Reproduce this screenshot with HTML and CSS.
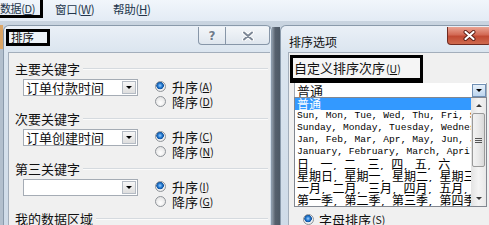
FILE: index.html
```html
<!DOCTYPE html>
<html lang="zh-CN">
<head>
<meta charset="utf-8">
<title>排序</title>
<link rel="stylesheet" href="styles.css">
</head>
<body>
<div class="screen">
  <div class="menubar">
    <span class="menu menu-data">数据(<u>D</u>)</span>
    <span class="menu menu-win">窗口(<u>W</u>)</span>
    <span class="menu menu-help">帮助(<u>H</u>)</span>
  </div>
  <div class="desk">
    <div class="edge"></div>
    <div class="dlg dlg-sort">
      <div class="titlebar">
        <span class="title title-box">排序</span>
        <div class="caps">
          <span class="cap cap-help">?</span>
          <span class="cap cap-close">
            <svg width="12" height="10" viewBox="0 0 12 10"><path d="M2 1.5 L10 8.5 M10 1.5 L2 8.5" stroke="#fff" stroke-width="4" stroke-linecap="round"/><path d="M2 1.5 L10 8.5 M10 1.5 L2 8.5" stroke="#7c8796" stroke-width="2" stroke-linecap="round"/></svg>
          </span>
        </div>
      </div>
      <div class="content content-sort">
        <div class="group">
          <div class="glabel">主要关键字</div>
          <div class="grow">
            <div class="combo"><span class="ctext">订单付款时间</span><span class="dd"></span></div>
            <div class="radios">
              <div class="radio"><span class="rb on"></span>升序<span class="acc">(<u>A</u>)</span></div>
              <div class="radio"><span class="rb"></span>降序<span class="acc">(<u>D</u>)</span></div>
            </div>
          </div>
        </div>
        <div class="group">
          <div class="glabel">次要关键字</div>
          <div class="grow">
            <div class="combo"><span class="ctext">订单创建时间</span><span class="dd"></span></div>
            <div class="radios">
              <div class="radio"><span class="rb on"></span>升序<span class="acc">(<u>C</u>)</span></div>
              <div class="radio"><span class="rb"></span>降序<span class="acc">(<u>N</u>)</span></div>
            </div>
          </div>
        </div>
        <div class="group">
          <div class="glabel">第三关键字</div>
          <div class="grow">
            <div class="combo"><span class="ctext"></span><span class="dd"></span></div>
            <div class="radios">
              <div class="radio"><span class="rb on"></span>升序<span class="acc">(<u>I</u>)</span></div>
              <div class="radio"><span class="rb"></span>降序<span class="acc">(<u>G</u>)</span></div>
            </div>
          </div>
        </div>
        <div class="group">
          <div class="glabel">我的数据区域</div>
        </div>
      </div>
    </div>
    <div class="gap"></div>
    <div class="dlg dlg-opt">
      <div class="titlebar">
        <span class="title title-opt">排序选项</span>
        <span class="cap-red">
          <svg width="13" height="11" viewBox="0 0 13 11"><path d="M2.5 2 L10.5 9 M10.5 2 L2.5 9" stroke="#5a1d14" stroke-width="4" stroke-linecap="round"/><path d="M2.5 2 L10.5 9 M10.5 2 L2.5 9" stroke="#fff" stroke-width="2.2" stroke-linecap="round"/></svg>
        </span>
      </div>
      <div class="content content-opt">
        <div class="order-box">自定义排序次序<span class="acc">(<u>U</u>)</span></div>
        <div class="combo combo-wide"><span class="ctext">普通</span><span class="dd dd-blue"></span></div>
        <div class="list">
          <div class="rows">
            <div class="row sel">普通</div>
            <div class="row">Sun, Mon, Tue, Wed, Thu, Fri, Sat</div>
            <div class="row">Sunday, Monday, Tuesday, Wednesday, Thursday</div>
            <div class="row">Jan, Feb, Mar, Apr, May, Jun, Jul, Aug</div>
            <div class="row">January, February, March, April, May</div>
            <div class="row"><span class="w">日</span>, <span class="w">一</span>, <span class="w">二</span>, <span class="w">三</span>, <span class="w">四</span>, <span class="w">五</span>, <span class="w">六</span></div>
            <div class="row"><span class="w">星期日</span>, <span class="w">星期一</span>, <span class="w">星期二</span>, <span class="w">星期三</span>, <span class="w">星期四</span></div>
            <div class="row"><span class="w">一月</span>, <span class="w">二月</span>, <span class="w">三月</span>, <span class="w">四月</span>, <span class="w">五月</span>, <span class="w">六月</span></div>
            <div class="row"><span class="w">第一季</span>, <span class="w">第二季</span>, <span class="w">第三季</span>, <span class="w">第四季</span></div>
          </div>
          <div class="sb">
            <div class="sb-btn"><span class="tri-up"></span></div>
            <div class="sb-thumb"><span class="grip"></span></div>
            <div class="sb-track"></div>
            <div class="sb-btn"><span class="tri-down"></span></div>
          </div>
        </div>
        <div class="radio radio-alpha"><span class="rb on"></span>字母排序<span class="acc">(<u>S</u>)</span></div>
      </div>
    </div>
  </div>
</div>
</body>
</html>
```

FILE: styles.css
```css
* { box-sizing: border-box; margin: 0; padding: 0; }

body {
  width: 489px;
  height: 225px;
  overflow: hidden;
  font-family: "Noto Sans CJK SC", "Liberation Sans", sans-serif;
  color: #111;
  background: #c7d2de;
}

.screen {
  width: 489px;
  height: 225px;
  overflow: hidden;
  display: flex;
  flex-direction: column;
}

/* menu bar */
.menubar {
  height: 21px;
  flex: none;
  display: flex;
  align-items: flex-start;
  background: linear-gradient(#f1f6fb, #e3ebf5);
  font-size: 11.5px;
  letter-spacing: -0.3px;
  color: #23354b;
}
.menu {
  height: 18px;
  padding-top: 2px;
  line-height: 13px;
  white-space: nowrap;
  flex: none;
}
.menu u { text-decoration: underline; }
.menu-data {
  width: 46px;
  margin-left: -3px;
  border: 3px solid #000;
  border-top: 0;
  overflow: hidden;
  font-size: 11px;
  letter-spacing: -0.4px;
}
.menu-win { margin-left: 12px; width: 58px; padding-top: 3px; }
.menu-help { padding-top: 3px; }

/* desktop */
.desk {
  flex: 1;
  display: flex;
  padding-top: 4px;
  background: linear-gradient(#c9d4e0, #b9c6d4);
  min-height: 0;
}
.edge {
  width: 3px;
  flex: none;
  background: linear-gradient(#dba566 0 24px, #b2bfcd 24px);
}
.gap {
  width: 8px;
  flex: none;
  margin-top: 2px;
  background: linear-gradient(90deg, #8f9ba8, #56616e 40%, #4d5966);
}

.dlg {
  display: flex;
  flex-direction: column;
  flex: none;
  border: 1px solid #8a9aab;
  border-bottom: 0;
  border-radius: 6px 6px 0 0;
  background: linear-gradient(#eaf0f7, #dbe5ef 26px, #cfdbe8);
}
.dlg-sort { width: 269px; padding: 0 1px 0 4px; }
.dlg-opt { width: 214px; padding: 0 0 0 7px; }

.titlebar {
  height: 26px;
  flex: none;
  display: flex;
  justify-content: space-between;
  align-items: flex-start;
}
.title { font-size: 12px; color: #111; white-space: nowrap; }
.title-box {
  width: 44px;
  height: 17px;
  margin: 3px 0 0 -2px;
  padding-left: 2px;
  border: 3px solid #000;
  line-height: 11px;
  font-size: 11.5px;
  background: #eef3f8;
}
.title-opt { margin: 9px 0 0 1px; line-height: 13px; }

.caps { display: flex; margin-top: 1px; }
.cap {
  height: 18px;
  display: flex;
  align-items: center;
  justify-content: center;
  border: 1px solid #8796a8;
  border-top: 0;
  background: linear-gradient(#f3f6f9, #dfe6ee);
}
.cap-help {
  width: 28px;
  border-radius: 0 0 0 4px;
  font-family: "DejaVu Sans", sans-serif;
  font-weight: bold;
  font-size: 12px;
  color: #6f7b8a;
  text-shadow: 0 0 2px #fff;
}
.cap-close { width: 45px; margin-left: -1px; border-radius: 0 0 4px 0; }

.cap-red {
  width: 44px;
  height: 18px;
  margin: 1px 2px 0 0;
  display: flex;
  align-items: center;
  justify-content: center;
  border: 1px solid #6e2a20;
  border-top: 0;
  border-radius: 0 0 4px 4px;
  background: linear-gradient(#eaa493, #d36a55 45%, #c14a33 55%, #cf6a4e);
}

.content {
  flex: 1;
  background: #f0f0f0;
  border-left: 1px solid #a3aebb;
  border-top: 1px solid #a3aebb;
}

/* sort dialog content */
.content-sort { padding: 9px 0 0 6px; }
.group { height: 50px; }
.glabel {
  display: flex;
  align-items: center;
  gap: 3px;
  height: 14px;
  line-height: 14px;
  font-size: 13px;
  white-space: nowrap;
}
.glabel::after {
  content: "";
  flex: 1;
  border-top: 1px solid #d5dadf;
  border-bottom: 1px solid #fbfbfb;
  margin-right: 2px;
}
.grow { display: flex; padding: 3px 0 0 8px; }

.combo {
  width: 115px;
  height: 17px;
  flex: none;
  display: flex;
  align-items: center;
  justify-content: space-between;
  background: #fff;
  border: 1px solid #a5acb5;
  font-size: 13px;
  line-height: 15px;
}
.ctext { padding-left: 2px; white-space: nowrap; }
.dd {
  width: 14px;
  height: 13px;
  margin-right: 1px;
  display: flex;
  align-items: center;
  justify-content: center;
  border: 1px solid #b4bbc4;
  background: linear-gradient(#f7f7f7, #dedede);
}
.dd::before {
  content: "";
  border-left: 3px solid transparent;
  border-right: 3px solid transparent;
  border-top: 3px solid #000;
}

.radios { margin-left: 17px; display: flex; flex-direction: column; }
.radio {
  height: 15px;
  display: flex;
  align-items: center;
  font-size: 13px;
  white-space: nowrap;
}
.rb {
  width: 11px;
  height: 11px;
  flex: none;
  margin-right: 6px;
  border-radius: 50%;
  border: 1px solid #8e9399;
  background: radial-gradient(circle at 50% 65%, #ffffff, #dcdcdc);
}
.rb.on {
  background: radial-gradient(circle at 45% 40%, #9fd0ff 0, #2a7fd4 2px, #0c4f9c 3.5px, #f6f6f6 4px, #e6e6e6 5.5px);
}
.acc { font-size: 10.5px; margin-left: 1px; }

/* options dialog content */
.content-opt { padding: 2px 6px 0 1px; display: flex; flex-direction: column; }
.order-box {
  width: 133px;
  height: 28px;
  flex: none;
  border: 3px solid #000;
  border-bottom-width: 5px;
  padding-left: 1px;
  font-size: 13px;
  line-height: 20px;
  white-space: nowrap;
  background: #f5f5f5;
}
.combo-wide {
  width: 193px;
  height: 14px;
  margin-left: 4px;
  border-top: 0;
  border-bottom: 0;
}
.dd-blue {
  margin-right: 0;
  border-color: #6f8fb4;
  background: linear-gradient(#e6f0fa, #bcd5ee);
}

.list {
  width: 193px;
  height: 110px;
  flex: none;
  margin-left: 4px;
  display: flex;
  border: 1px solid #828790;
  background: #fff;
}
.rows { flex: 1; min-width: 0; overflow: hidden; }
.row {
  height: 12px;
  line-height: 12px;
  padding-left: 2px;
  overflow: hidden;
  white-space: nowrap;
  font-family: "Liberation Mono", monospace;
  font-size: 9.6px;
  color: #000;
}
.row .w {
  font-family: "Noto Sans CJK SC", sans-serif;
  font-size: 12px;
  line-height: 12px;
}
.row.sel {
  background: #3399ff;
  color: #fff;
  font-family: "Noto Sans CJK SC", sans-serif;
  font-size: 12px;
}

.sb {
  width: 15px;
  flex: none;
  display: flex;
  flex-direction: column;
  background: linear-gradient(90deg, #e3e3e3, #f4f4f4 50%, #e8e8e8);
}
.sb-btn {
  height: 15px;
  flex: none;
  display: flex;
  align-items: center;
  justify-content: center;
}
.tri-up {
  border-left: 3px solid transparent;
  border-right: 3px solid transparent;
  border-bottom: 3px solid #3a3a3a;
}
.tri-down {
  border-left: 3px solid transparent;
  border-right: 3px solid transparent;
  border-top: 3px solid #3a3a3a;
}
.sb-thumb {
  height: 54px;
  flex: none;
  margin: 0 1px;
  display: flex;
  align-items: center;
  justify-content: center;
  border: 1px solid #9a9a9a;
  border-radius: 2px;
  background: linear-gradient(90deg, #f3f3f3, #e9e9e9 50%, #d9d9d9);
}
.grip {
  width: 7px;
  height: 5px;
  background: linear-gradient(#555 0 1px, transparent 1px 2px, #555 2px 3px, transparent 3px 4px, #555 4px 5px);
}
.sb-track { flex: 1; }

.radio-alpha { margin-top: 5px; padding-left: 13px; height: 14px; }
.radio-alpha .rb { margin-right: 5px; }
```
